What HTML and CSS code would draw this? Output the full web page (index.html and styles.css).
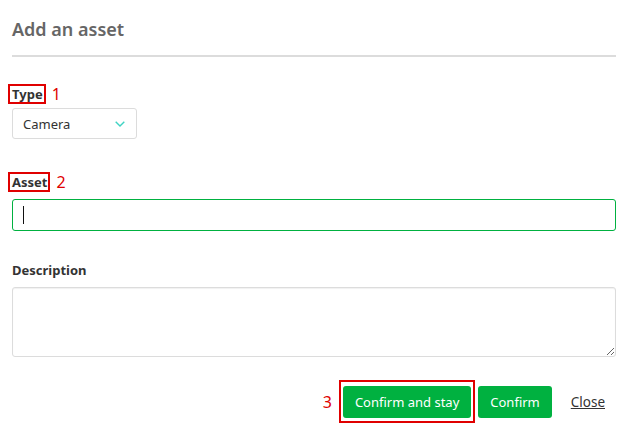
FILE: index.html
```html
<!DOCTYPE html>
<html lang="en">
<head>
<meta charset="utf-8">
<title>Add an asset</title>
<link rel="stylesheet" href="styles.css">
</head>
<body>
<div class="dialog">
  <h1 class="title">Add an asset</h1>

  <div class="field field-type">
    <div class="label-row"><span class="label mark">Type</span><span class="num">1</span></div>
    <div class="select">
      <span class="select-value">Camera</span>
      <svg class="chev" width="10" height="6" viewBox="0 0 10 6"><path d="M0.7 0.7 L5 5 L9.3 0.7" fill="none" stroke="#3fd3c3" stroke-width="1.4"/></svg>
    </div>
  </div>

  <div class="field field-asset">
    <div class="label-row"><span class="label mark">Asset</span><span class="num">2</span></div>
    <div class="input focused"><span class="caret"></span></div>
  </div>

  <div class="field field-desc">
    <div class="label-row"><span class="label">Description</span></div>
    <textarea class="textarea"></textarea>
  </div>

  <div class="actions">
    <span class="num num-3">3</span>
    <span class="btn-mark"><button class="btn">Confirm and stay</button></span>
    <button class="btn">Confirm</button>
    <a class="close" href="#">Close</a>
  </div>
</div>
</body>
</html>
```
FILE: styles.css
```css
* { box-sizing: border-box; }
body {
  margin: 0;
  font-family: "Noto Sans", "Open Sans", sans-serif;
  color: #333;
  background: #fff;
}
.dialog {
  padding: 0 14px 0 12px;
}
.title {
  margin: 0;
  padding-top: 17px;
  height: 57px;
  font-size: 18px;
  line-height: 24px;
  font-weight: 600;
  color: #666;
  border-bottom: 2px solid #dcdcdc;
}
.field { display: flex; flex-direction: column; align-items: flex-start; }
.field-type { margin-top: 27px; }
.field-asset { margin-top: 33px; }
.field-desc { margin-top: 31px; }
.label-row {
  display: flex;
  align-items: center;
  height: 20px;
}
.label {
  font-size: 13px;
  font-weight: 700;
  line-height: 16px;
  color: #333;
}
.mark {
  border: 2px solid #e00000;
  margin-left: -4px;
  padding: 0 1px 0 2px;
}
.num {
  color: #e00000;
  font-size: 16px;
  line-height: 20px;
  margin-left: 6px;
}
.select {
  margin-top: 4px;
  width: 125px;
  height: 31px;
  border: 1px solid #dcdcdc;
  border-radius: 3px;
  display: flex;
  align-items: center;
  justify-content: space-between;
  padding: 0 11px 0 10px;
  font-size: 13px;
}
.chev { margin-top: 1px; }
.input {
  margin-top: 7px;
  width: 100%;
  height: 32px;
  border: 1px solid #00b140;
  border-radius: 3px;
  display: flex;
  align-items: center;
  padding-left: 10px;
}
.caret {
  width: 1px;
  height: 18px;
  background: #111;
}
.field-desc .label-row { height: 16px; }
.textarea {
  margin-top: 9px;
  width: 100%;
  height: 70px;
  border: 1px solid #dcdcdc;
  border-radius: 3px;
  box-shadow: inset 0 1px 1px rgba(0,0,0,0.06);
  font-family: inherit;
  display: block;
}
.actions {
  margin-top: 23px;
  display: flex;
  align-items: center;
  justify-content: flex-end;
  padding-right: 11px;
}
.num-3 { margin: 0 7px 0 0; }
.btn-mark {
  border: 2px solid #e00000;
  padding: 4px 2px 3px 2px;
  display: inline-flex;
}
.btn {
  height: 32px;
  background: #00b140;
  color: #fff;
  border: none;
  border-radius: 3px;
  font-family: inherit;
  font-size: 13px;
  padding: 0 12px;
  margin: 0;
}
.actions > .btn { margin-left: 3px; }
.close {
  margin-left: 19px;
  font-size: 13.5px;
  color: #333;
  text-decoration: underline;
}
```
